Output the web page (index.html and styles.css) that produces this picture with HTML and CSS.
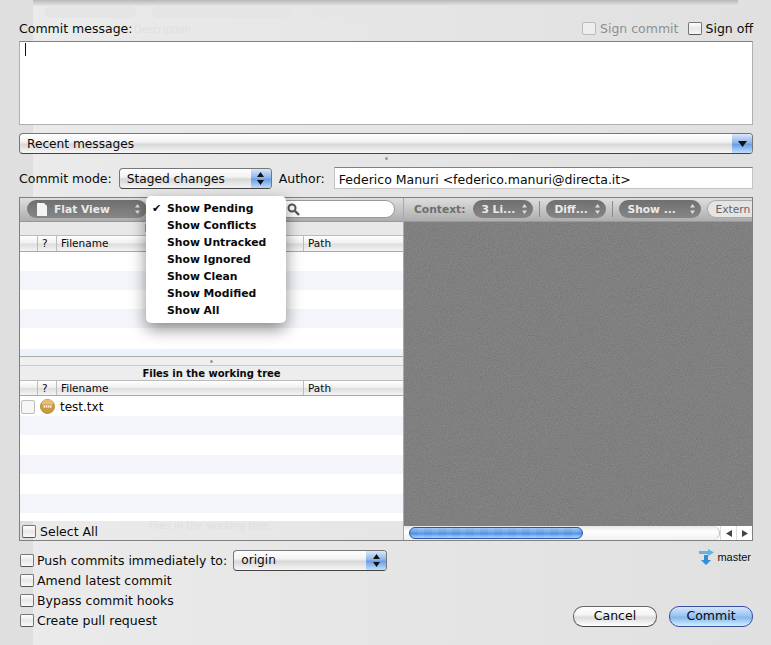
FILE: index.html
```html
<!DOCTYPE html>
<html lang="en">
<head>
    <meta charset="UTF-8">
    <meta name="viewport" content="width=device-width, initial-scale=1.0">
    <title>Commit</title>
    <link rel="stylesheet" href="styles.css">
</head>
<body>
    <div class="backdrop">
        <div class="strip"></div>
        <div class="top-shadow"></div>
        <div class="ghost-pill gp1"></div>
        <div class="ghost-pill gp2"></div>
        <div class="ghost-pill gp3"></div>
        <span class="ghost-text gt1">Description</span>
        <span class="ghost-text gt2">Files in the working tree</span>
    </div>
    <div class="dialog">
        <div class="top-row">
            <span>Commit message:</span>
            <div class="sign-options">
                <label class="check disabled"><span class="box"></span>Sign commit</label>
                <label class="check"><span class="box"></span>Sign off</label>
            </div>
        </div>
        <div class="message-box"><span class="caret"></span></div>
        <div class="recent-select">
            <span class="select-text">Recent messages</span>
            <span class="select-arrow"><svg width="9" height="6" viewBox="0 0 9 6"><path d="M0 0h9L4.500 6z" fill="#111"/></svg></span>
        </div>
        <div class="grip-row"><span class="grip"></span></div>
        <div class="mode-row">
            <span>Commit mode:</span>
            <div class="mode-select">
                <span class="select-text">Staged changes</span>
                <span class="select-arrow"><svg width="7" height="13" viewBox="0 0 7 13"><path d="M3.500 0L7 5H0zM0 8h7l-3.500 5z" fill="#111"/></svg></span>
            </div>
            <span>Author:</span>
            <div class="author-input">Federico Manuri &lt;federico.manuri@directa.it&gt;</div>
        </div>

        <div class="workspace">
            <div class="left-pane">
                <div class="toolbar">
                    <div class="pill flat-view">
                        <svg width="10" height="13" viewBox="0 0 10 13"><path d="M0 0h7l3 3v10H0z" fill="#f4f4f4"/></svg>
                        <span>Flat View</span>
                        <svg width="5" height="10" viewBox="0 0 5 10"><path d="M2.500 0L5 3.500H0zM0 6.500h5L2.500 10z" fill="#ddd"/></svg>
                    </div>
                    <div class="search-box">
                        <svg width="13" height="13" viewBox="0 0 13 13"><circle cx="5" cy="5" r="3.500" fill="none" stroke="#555" stroke-width="2"/><path d="M8 8l4 4" stroke="#555" stroke-width="2.400"/></svg>
                    </div>
                </div>
                <div class="pane-title">Files staged for commit</div>
                <div class="col-header first">
                    <span class="col col-check"></span><span class="col col-status">?</span><span class="col col-name">Filename</span><span class="col col-path">Path</span>
                </div>
                <div class="rows rows-top">
                    <div class="row"></div><div class="row alt"></div><div class="row"></div><div class="row alt"></div><div class="row tall"></div><div class="row short"></div>
                </div>
                <div class="splitter"><span class="grip"></span></div>
                <div class="pane-title second">Files in the working tree</div>
                <div class="col-header">
                    <span class="col col-check"></span><span class="col col-status">?</span><span class="col col-name">Filename</span><span class="col col-path">Path</span>
                </div>
                <div class="rows">
                    <div class="row file-row">
                        <span class="box"></span>
                        <svg class="status-icon" width="15" height="15" viewBox="0 0 15 15"><circle cx="7.500" cy="7.500" r="7" fill="#cf9a3c" stroke="#a87a28" stroke-width=".8"/><path d="M1.500 5.500a6 5 0 0 1 12 0z" fill="#e6bf74"/><rect x="3.500" y="6.500" width="8" height="2" fill="#fff"/><path d="M5.500 6.500v2M7.500 6.500v2M9.500 6.500v2" stroke="#cf9a3c" stroke-width=".7"/></svg>
                        <span>test.txt</span>
                    </div>
                    <div class="row alt"></div><div class="row"></div><div class="row alt"></div><div class="row"></div><div class="row alt"></div><div class="row"></div>
                </div>
                <label class="check select-all"><span class="box"></span>Select All</label>
            </div>
            <div class="right-pane">
                <div class="toolbar diff-toolbar">
                    <span class="context-label">Context:</span>
                    <div class="pill small-pill w60 first-pill"><span>3 Li...</span><svg width="5" height="10" viewBox="0 0 5 10"><path d="M2.500 0L5 3.500H0zM0 6.500h5L2.500 10z" fill="#ddd"/></svg></div>
                    <span class="tool-sep"></span>
                    <div class="pill small-pill w60"><span>Diff...</span><svg width="5" height="10" viewBox="0 0 5 10"><path d="M2.500 0L5 3.500H0zM0 6.500h5L2.500 10z" fill="#ddd"/></svg></div>
                    <span class="tool-sep"></span>
                    <div class="pill small-pill w82"><span>Show ...</span><svg width="5" height="10" viewBox="0 0 5 10"><path d="M2.500 0L5 3.500H0zM0 6.500h5L2.500 10z" fill="#ddd"/></svg></div>
                    <div class="extern-btn">Extern</div>
                </div>
                <div class="diff-area">
                    <svg class="grain" width="100%" height="100%">
                        <filter id="grain" color-interpolation-filters="sRGB">
                            <feTurbulence type="fractalNoise" baseFrequency="0.9" numOctaves="2"/>
                            <feColorMatrix values="0.12 0 0 0 0.44  0.12 0 0 0 0.44  0.12 0 0 0 0.44  0 0 0 0 1"/>
                        </filter>
                        <rect width="100%" height="100%" filter="url(#grain)"/>
                    </svg>
                </div>
                <div class="scrollbar">
                    <div class="scroll-track"><div class="scroll-thumb"></div></div>
                    <span class="scroll-btn"><svg width="6" height="7" viewBox="0 0 6 7"><path d="M6 0v7L0 3.500z" fill="#444"/></svg></span>
                    <span class="scroll-btn"><svg width="6" height="7" viewBox="0 0 6 7"><path d="M0 0v7l6-3.500z" fill="#444"/></svg></span>
                </div>
            </div>
        </div>

        <div class="bottom">
            <div class="options">
                <div class="push-row">
                    <label class="check"><span class="box"></span>Push commits immediately to:</label>
                    <div class="origin-select">
                        <span class="select-text">origin</span>
                        <span class="select-arrow"><svg width="7" height="13" viewBox="0 0 7 13"><path d="M3.500 0L7 5H0zM0 8h7l-3.500 5z" fill="#111"/></svg></span>
                    </div>
                </div>
                <label class="check"><span class="box"></span>Amend latest commit</label>
                <label class="check"><span class="box"></span>Bypass commit hooks</label>
                <label class="check"><span class="box"></span>Create pull request</label>
            </div>
            <div class="actions">
                <div class="branch">
                    <svg width="16" height="16" viewBox="0 0 16 16"><path d="M0 2h9V0l6 3.500-6 3.500V5H0z" fill="#5fb2ea"/><path d="M5 6h4v5h3l-5 5-5-5h3z" fill="#2f8fd8"/></svg>
                    <span>master</span>
                </div>
                <div class="buttons">
                    <div class="btn">Cancel</div>
                    <div class="btn btn-primary">Commit</div>
                </div>
            </div>
        </div>

        <div class="popup-menu">
            <div class="menu-item"><span class="tick">✔</span>Show Pending</div>
            <div class="menu-item">Show Conflicts</div>
            <div class="menu-item">Show Untracked</div>
            <div class="menu-item">Show Ignored</div>
            <div class="menu-item">Show Clean</div>
            <div class="menu-item">Show Modified</div>
            <div class="menu-item">Show All</div>
        </div>
    </div>
</body>
</html>
```

FILE: styles.css
```css
html, body {
    margin: 0;
    padding: 0;
    height: 645px;
    overflow: hidden;
}
body {
    font-family: "DejaVu Sans", sans-serif;
    font-size: 12.500px;
    color: #0a0a0a;
    background: linear-gradient(to right, #ebebeb, #e0e0e0);
    position: relative;
}

/* window behind the sheet, showing through */
.backdrop {
    position: absolute;
    left: 0;
    top: 0;
    width: 771px;
    height: 645px;
}
.strip {
    position: absolute;
    left: 0;
    top: 0;
    width: 33px;
    height: 645px;
    background: #dfdfdf;
}
.top-shadow {
    position: absolute;
    left: 33px;
    top: 0;
    width: 705px;
    height: 6px;
    background: linear-gradient(to bottom, #b8b8b8, #e6e6e6);
}
.ghost-pill {
    position: absolute;
    top: 6px;
    height: 12px;
    border-radius: 6px;
    background: #e5e5e5;
}
.gp1 { left: 44px; width: 92px; }
.gp2 { left: 152px; width: 140px; }
.gp3 { left: 310px; width: 70px; }
.ghost-text {
    position: absolute;
    font-size: 10px;
    color: #e0e0e0;
}
.gt1 { left: 134px; top: 24px; }
.gt2 { left: 149px; top: 520px; }

.dialog {
    position: relative;
    height: 645px;
    box-sizing: border-box;
    padding: 20px 18px 0 19px;
}
.top-row {
    display: flex;
    justify-content: space-between;
    align-items: center;
    height: 17px;
    margin-bottom: 4px;
}
.sign-options {
    display: flex;
    gap: 9px;
}
.check {
    display: flex;
    align-items: center;
    gap: 4px;
}
.box {
    display: inline-block;
    width: 12px;
    height: 11px;
    flex: none;
    border: 1px solid #777;
    border-bottom-color: #555;
    border-radius: 2px;
    background: linear-gradient(to bottom, #fff, #e8e8e8 50%, #f8f8f8);
}
.disabled {
    color: #8f8f8f;
}
.disabled .box {
    border-color: #bbb;
    background: #eee;
}
.message-box {
    height: 80px;
    background: #fff;
    border: 1px solid #b0b0b0;
    border-top-color: #808080;
    padding: 1px 5px;
}
.caret {
    display: block;
    width: 1px;
    height: 13px;
    background: #111;
}
.recent-select, .mode-select, .origin-select {
    display: flex;
    align-items: center;
    justify-content: space-between;
    box-sizing: border-box;
    height: 21px;
    border: 1px solid #777;
    border-bottom-color: #444;
    border-radius: 4px;
    background: linear-gradient(to bottom, #fff, #f3f3f3 40%, #d8d8d8 55%, #f6f6f6);
    overflow: hidden;
}
.recent-select {
    margin-top: 8px;
}
.select-text {
    padding-left: 7px;
    font-size: 12.200px;
}
.select-arrow {
    display: flex;
    align-items: center;
    justify-content: center;
    width: 20px;
    height: 100%;
    background: linear-gradient(to bottom, #dbe7fa, #8fb6ec 45%, #6a9ee6 55%, #bfe0fa);
}
.grip-row {
    display: flex;
    justify-content: center;
    height: 6px;
    padding-top: 3px;
}
.grip {
    width: 3px;
    height: 3px;
    border-radius: 50%;
    background: #999;
}
.mode-row {
    display: flex;
    align-items: center;
    gap: 7px;
    height: 22px;
    margin-top: 4px;
}
.mode-select {
    width: 153px;
    margin-top: 1px;
}
.author-input {
    flex: 1;
    height: 22px;
    box-sizing: border-box;
    margin-left: 2px;
    background: #fff;
    border: 1px solid #c4c4c4;
    border-top-color: #808080;
    padding: 4px 4px;
    line-height: 15px;
    white-space: nowrap;
}
.workspace {
    display: flex;
    height: 342px;
    margin-top: 8px;
    border: 1px solid #808080;
}
.left-pane {
    width: 383px;
    flex: none;
    display: flex;
    flex-direction: column;
}
.right-pane {
    flex: 1;
    display: flex;
    flex-direction: column;
    min-width: 0;
    border-left: 1px solid #aaa;
}
.toolbar {
    display: flex;
    align-items: center;
    box-sizing: border-box;
    height: 24px;
    flex: none;
    padding: 0 8px 1px 7px;
    background: linear-gradient(to bottom, #dedede, #adadad);
    border-bottom: 1px solid #999;
}
.pill {
    display: flex;
    align-items: center;
    box-sizing: border-box;
    height: 18px;
    border-radius: 9px;
    background: linear-gradient(to bottom, #6f6f6f, #868686);
    color: #eaeaea;
    font-weight: bold;
    font-size: 10.700px;
}
.flat-view {
    width: 120px;
    padding: 0 7px 0 10px;
    gap: 7px;
}
.flat-view span {
    flex: 1;
}
.search-box {
    display: flex;
    align-items: center;
    box-sizing: border-box;
    width: 125px;
    height: 18px;
    margin-left: auto;
    padding-left: 16px;
    border-radius: 9px;
    background: #fff;
    border: 1px solid #999;
}
.pane-title {
    flex: none;
    height: 13px;
    line-height: 13px;
    text-align: center;
    font-size: 10px;
    font-weight: bold;
    background: #e8e8e8;
}
.pane-title.second {
    height: 14px;
    line-height: 15px;
    background: #ededed;
}
.col-header {
    display: flex;
    flex: none;
    height: 16px;
    font-size: 10.500px;
    line-height: 15px;
    box-sizing: border-box;
    border-top: 1px solid #bbb;
    border-bottom: 1px solid #a8a8a8;
    background: linear-gradient(to bottom, #fff, #f0f0f0 45%, #dedede 55%, #f4f4f4);
}
.col-header.first {
    height: 17px;
}
.col {
    box-sizing: border-box;
    border-right: 1px solid #bbb;
    padding-left: 4px;
}
.col-check { width: 18px; padding: 0; }
.col-status { width: 19px; }
.col-name { width: 247px; }
.col-path { flex: 1; border-right: none; }
.rows {
    flex: none;
    height: 125px;
    overflow: hidden;
    background: #fff;
}
.rows-top {
    height: 104px;
}
.row {
    height: 19.500px;
}
.rows-top .row {
    height: 19px;
}
.row.alt {
    background: #f3f5fa;
}
.rows-top .row.tall {
    height: 21px;
}
.rows-top .row.short {
    height: 7px;
    background: #edf3fd;
}
.file-row {
    display: flex;
    align-items: center;
    gap: 5px;
    box-sizing: border-box;
    padding: 2px 0 0 1px;
    font-size: 12px;
}
.file-row .box {
    border-color: #bdbdbd;
    background: #f6f6f6;
    height: 12px;
}
.status-icon {
    flex: none;
}
.splitter {
    display: flex;
    flex: none;
    justify-content: center;
    box-sizing: border-box;
    height: 10px;
    padding-top: 3px;
    background: #f0f0f0;
    border-top: 1px solid #aaa;
    border-bottom: 1px solid #ccc;
}
.select-all {
    flex: none;
    box-sizing: border-box;
    height: 19px;
    padding: 1px 0 0 2px;
}
.diff-toolbar {
    padding: 0 0 1px 10px;
    gap: 6px;
    overflow: hidden;
    white-space: nowrap;
}
.context-label {
    color: #6e6e6e;
    font-weight: bold;
    font-size: 10.700px;
}
.small-pill {
    justify-content: space-between;
    padding: 0 6px 0 8px;
    flex: none;
}
.first-pill {
    margin-left: 2px;
}
.w60 { width: 60px; }
.w82 { width: 82px; }
.tool-sep {
    width: 1px;
    height: 16px;
    background: #8a8a8a;
    flex: none;
}
.extern-btn {
    flex: none;
    height: 18px;
    line-height: 17px;
    box-sizing: border-box;
    padding-left: 7px;
    width: 46px;
    border: 1px solid #aaa;
    border-radius: 9px 0 0 9px;
    border-right: none;
    color: #666;
    font-size: 10.700px;
    background: #e4e4e4;
}
.diff-area {
    flex: 1;
    min-height: 0;
    background: #7f7f7f;
}
.grain {
    display: block;
}
.scrollbar {
    display: flex;
    flex: none;
    align-items: center;
    height: 14px;
    background: #fff;
}
.scroll-track {
    flex: 1;
    height: 14px;
    box-sizing: border-box;
    padding: 1px 0 0 5px;
    border-radius: 0 8px 8px 0;
    border-right: 1px solid #bbb;
    background: linear-gradient(to bottom, #e8e8e8, #fff 40%, #f0f0f0);
}
.scroll-thumb {
    width: 174px;
    height: 12px;
    box-sizing: border-box;
    border: 1px solid #2c55a8;
    border-radius: 7px;
    background: repeating-linear-gradient(to right, transparent 0 8px, rgba(255, 255, 255, 0.07) 8px 14px), linear-gradient(to bottom, #9ec3f0, #5d9fec 45%, #4f90e4 55%, #a6d4fa);
}
.scroll-btn {
    display: flex;
    align-items: center;
    justify-content: center;
    width: 16px;
    height: 14px;
    box-sizing: border-box;
    border-left: 1px solid #ddd;
}
.bottom {
    display: flex;
    justify-content: space-between;
}
.options {
    display: flex;
    flex-direction: column;
    padding-top: 9px;
}
.options .check {
    height: 20px;
    gap: 3px;
    margin-left: 1px;
}
.push-row {
    display: flex;
    align-items: center;
    gap: 6px;
    height: 20px;
}
.origin-select {
    width: 154px;
}
.actions {
    display: flex;
    flex-direction: column;
    align-items: flex-end;
    padding-top: 8px;
}
.branch {
    display: flex;
    align-items: center;
    gap: 2px;
    height: 16px;
    font-family: "Liberation Sans", sans-serif;
    font-size: 11px;
    margin-right: 2px;
}
.buttons {
    display: flex;
    gap: 12px;
    margin-top: 41px;
}
.btn {
    box-sizing: border-box;
    width: 84px;
    height: 21px;
    line-height: 18px;
    text-align: center;
    border: 1px solid #666;
    border-bottom-color: #444;
    border-radius: 10px;
    background: linear-gradient(to bottom, #fff, #f4f4f4 40%, #dcdcdc 55%, #fff);
}
.btn-primary {
    border-color: #3a4ea0;
    background: linear-gradient(to bottom, #d8e7fb, #9ac4f2 45%, #84b8f0 55%, #d0f0fe);
}
.popup-menu {
    position: absolute;
    left: 146px;
    top: 196px;
    width: 140px;
    box-sizing: border-box;
    padding: 4px 0;
    background: #fff;
    border-radius: 5px;
    box-shadow: 0 6px 16px rgba(0, 0, 0, 0.45);
    font-weight: bold;
    font-size: 10.800px;
}
.menu-item {
    position: relative;
    height: 17px;
    line-height: 17px;
    padding-left: 21px;
}
.tick {
    position: absolute;
    left: 6px;
    font-size: 11px;
}
```
